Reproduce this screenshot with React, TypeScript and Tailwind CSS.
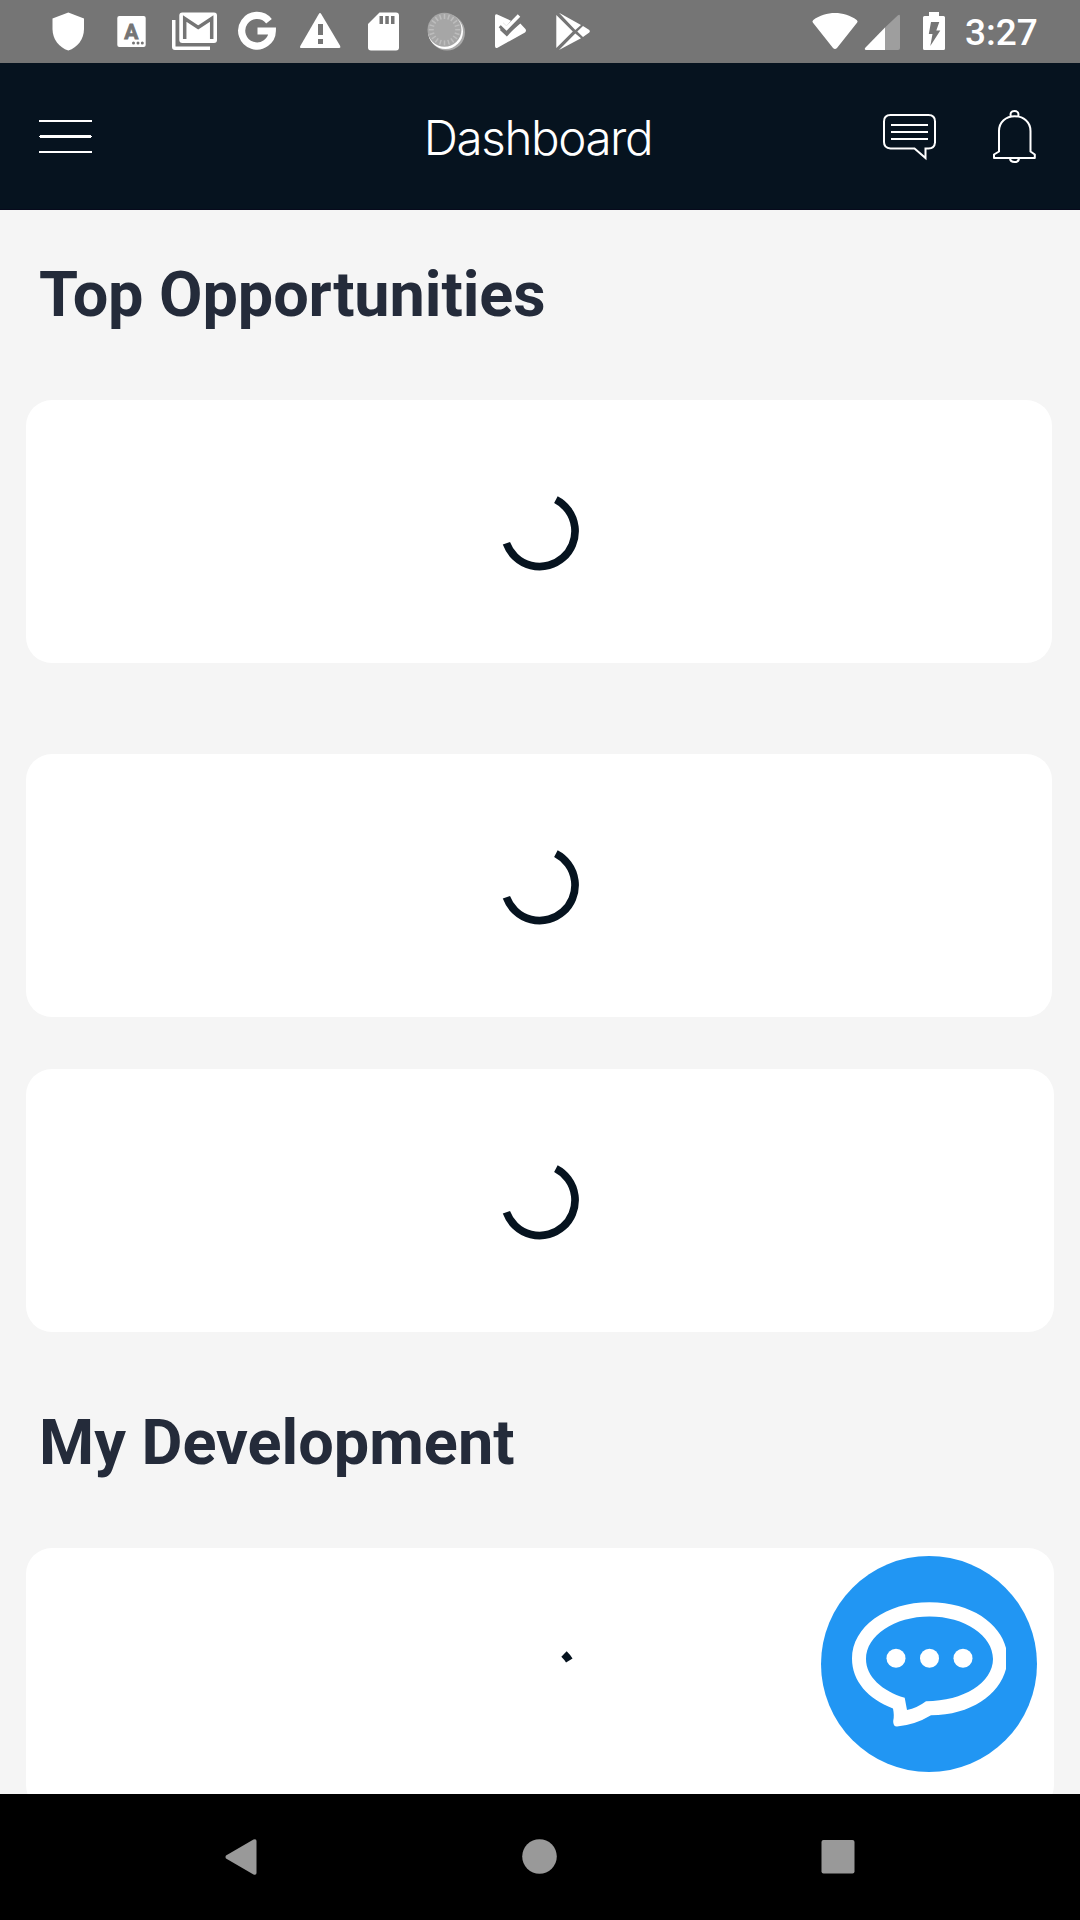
import type { ReactNode } from 'react';

function StatusIcon({ x, w = 63, children }: { x: number; w?: number; children: ReactNode }) {
  return (
    <svg width={w} height={63} viewBox={`${x} 0 ${w} 63`} fill="#fff" className="shrink-0">
      {children}
    </svg>
  );
}

const ticks = Array.from({ length: 20 }, (_, i) => i * 18);

function StatusBar() {
  return (
    <div className="flex h-[63px] shrink-0 items-center bg-[#757575] pl-[37px]">
      <StatusIcon x={37}>
        <path d="M68.3 12.5 84 18.5V29c0 10-6.500 18.500-15.700 21.500C59 47.500 52.500 39 52.500 29V18.500Z" />
      </StatusIcon>
      <StatusIcon x={100}>
        <rect x="117.300" y="16" width="28.400" height="31" rx="2" />
        <text x="131.200" y="38.500" textAnchor="middle" fill="#757575" stroke="#757575" strokeWidth="0.800" fontFamily="Roboto" fontWeight="700" fontSize="21">A</text>
        <g fill="#757575"><circle cx="133.500" cy="43" r="1.500" /><circle cx="138" cy="43" r="1.500" /><circle cx="142.300" cy="43" r="1.500" /></g>
      </StatusIcon>
      <StatusIcon x={163}>
        <path d="M172 20h3.500v26.500H210V50H175q-3 0-3-3Z" />
        <rect x="179.300" y="12.500" width="37.700" height="30.500" rx="3" />
        <path d="M184.700 39V18.500L198.200 27.500 211.700 18.500V39" fill="none" stroke="#757575" strokeWidth="3.500" />
      </StatusIcon>
      <StatusIcon x={226}>
        <path d="M269 21.200A15.300 15.300 0 1 0 272.300 31H257.500" fill="none" stroke="#fff" strokeWidth="7.200" />
      </StatusIcon>
      <StatusIcon x={289}>
        <path d="M318.800 14q1.200-2 2.400 0L340.200 46q.8 2-1 2H301.500q-2.200 0-1.200-2Z" />
        <path d="M318 24h5v11h-5zM318 39h5v5h-5z" fill="#757575" />
      </StatusIcon>
      <StatusIcon x={352}>
        <path d="M379.500 12.500H396q3 0 3 3V47.500q0 3-3 3H371q-3 0-3-3V24Z" />
        <path d="M379.500 16h3.500v8h-3.500zM385.300 16h3.500v8h-3.500zM391 16h3.500v8H391z" fill="#757575" />
      </StatusIcon>
      <StatusIcon x={415}>
        <circle cx="447" cy="32.500" r="18" fill="#aaa" />
        <circle cx="445.500" cy="31.500" r="17.500" />
        <circle cx="444.500" cy="29.700" r="17" fill="#a6a6a6" />
        <g stroke="#bdbdbd" strokeWidth="1.500">
          {ticks.map((a) => <path key={a} d="M444.500 14v5" transform={`rotate(${a} 444.500 29.700)`} />)}
        </g>
      </StatusIcon>
      <StatusIcon x={478}>
        <path d="M495 16q0-2.500 2.300-1.500L511 20.800 506.500 26l-3.300-3.200-4.500 4.500 8 8L520.300 23.500 525 28.500q2 2 0 4L498 47.500q-3 1.500-3-1.500Z" />
        <path d="m501 28.800 5.800 5.500L518.500 21.500" fill="none" stroke="#757575" strokeWidth="3.200" />
        <path d="M501.500 23.500 506.500 28.200 519 15.500" fill="none" stroke="#fff" strokeWidth="3.500" />
      </StatusIcon>
      <StatusIcon x={541}>
        <path d="M556.300 15 572.800 31.500 556.300 48ZM559 12.800 581 25 575.300 30ZM559 50 575.300 33.500 581 38.200ZM583 26 589.300 30q1.200 1.300 0 2.600L583 37 577.300 31.500Z" />
      </StatusIcon>
      <div className="flex-1" />
      <StatusIcon x={805} w={56}>
        <path d="M812.800 22.500q-1-1.500.5-2.500C826 10.700 844 10.700 856.700 20q1.500 1 .5 2.500L837 48q-2 2-4 0Z" />
      </StatusIcon>
      <StatusIcon x={861} w={50}>
        <path d="M885 27.500 898 15.200q2-1 2 1V48q0 2-2 2H885Z" fill="#9e9e9e" />
        <path d="M885 27.500V50H866q-2-.5-.7-2.300Z" />
      </StatusIcon>
      <StatusIcon x={911} w={54}>
        <path d="M929 12h10v4h4.500q1.500 0 1.500 1.500v31q0 1.500-1.500 1.500h-19q-1.500 0-1.500-1.500v-31q0-1.500 1.500-1.500h4.500Z" />
        <path d="M931 22h8.300l-3 8.500h4L930.300 46l2.200-12h-3.700Z" fill="#757575" />
      </StatusIcon>
      <span className="w-[115px] pt-[3px] font-['Roboto'] text-[37px] leading-[60px] font-medium text-white">3:27</span>
    </div>
  );
}

function Header() {
  return (
    <header className="flex h-[147px] shrink-0 items-center justify-between border-b border-[#070a1c] bg-[#06131f] pr-[42px] pl-[39px]">
      <svg width="150" height="147" viewBox="39 63 150 147" fill="#fff">
        <path d="M39 120h53v2H39zM40 135h51v3H40zM39 136h53v1H39zM39 151h53v2H39z" />
      </svg>
      <h1 className="pt-1 pl-[5px] font-['Inter'] text-[47.500px] leading-none font-light tracking-[-1.400px] text-white">Dashboard</h1>
      <svg width="156" height="147" viewBox="882 63 156 147" fill="none" stroke="#fff" strokeWidth="2">
        <path d="M890.500 115H928.500Q935 115 935 121.500V142.500Q934.500 148.500 928.500 148.500H925.500V158L914.500 148.500H890.500Q884 148 884 142V121.500Q884 115 890.500 115Z" />
        <path d="M891 125h37M891 132h37M891 139h37" />
        <path d="M1010.800 116.500C1010 113 1011 111 1014.500 111S1019 113 1018.200 116.500" />
        <path d="M999 151.500V131C999 122 1006 116.200 1014.700 116.200S1030.500 122 1030.500 131V151.500L1034.800 154.500V158H994V154.500Z" strokeLinejoin="round" />
        <path d="M1010 158.500Q1010.500 162 1014.500 162T1019 158.500" />
      </svg>
    </header>
  );
}

function Spinner({ arc }: { arc: string }) {
  return (
    <svg width="80" height="80" viewBox="-40 -40 80 80" fill="none" stroke="#06131f" strokeWidth="7.700">
      <path d={arc} />
    </svg>
  );
}

const LONG_ARC = 'M15.900-32.300A35.400 35.400 0 1 1-33.600 11.300';
const SHORT_ARC = 'M24-26A35.400 35.400 0 0 1 29.300-19.500';

function LoadingCard({ className, arc = LONG_ARC }: { className: string; arc?: string }) {
  return (
    <div className={`flex h-[263px] shrink-0 items-center justify-center rounded-[26px] bg-white ${className}`}>
      <Spinner arc={arc} />
    </div>
  );
}

function ChatButton() {
  return (
    <button className="absolute right-[43px] bottom-[22px] size-[216px] rounded-full bg-[#2196f3]" aria-label="Chat">
      <svg width="216" height="216" viewBox="821 1556 216 216" fill="#fff">
        <path d="M929.500 1602.300C972 1602.300 1000 1624 1006 1648V1669C999 1695 971 1715 931 1715.300Q915 1725 897 1726.500Q893 1726.500 893.200 1721Q894.500 1716 893 1708.500C868 1699 852 1681 852 1658.500C852 1627 886 1602.300 929.500 1602.300Z" />
        <path d="M929.500 1616.500C964.500 1616.500 993 1635.500 993 1659S963.500 1701.200 926 1701.200Q917 1708 907 1710L904.700 1697.800C882 1691 866 1676.500 866 1659C866 1635.500 894.500 1616.500 929.500 1616.500Z" fill="#2196f3" />
        <circle cx="896" cy="1658.300" r="9.500" />
        <circle cx="929.500" cy="1658.300" r="9.500" />
        <circle cx="963" cy="1658.300" r="9.500" />
      </svg>
    </button>
  );
}

function NavBar() {
  return (
    <nav className="flex h-[126px] shrink-0 items-center justify-between bg-black pr-[225px] pl-[225px]">
      <svg width="32" height="126" viewBox="225 1794 32 126" fill="#999">
        <path d="M226 1858.500q-1-1.500 0-3L253.500 1839.500q3-1 3 1.500V1873q0 2.500-3 1.500Z" />
      </svg>
      <svg width="36" height="126" viewBox="521 1794 36 126" fill="#999">
        <circle cx="539.500" cy="1856.500" r="17.300" />
      </svg>
      <svg width="34" height="126" viewBox="821 1794 34 126" fill="#999">
        <rect x="821.500" y="1840" width="33" height="33.500" rx="2" />
      </svg>
    </nav>
  );
}

export default function App() {
  return (
    <div className="flex h-[1920px] w-[1080px] flex-col overflow-hidden bg-[#f5f5f5]">
      <StatusBar />
      <Header />
      <main className="relative flex h-[1584px] shrink-0 flex-col overflow-hidden pl-[26px] font-['Roboto'] text-[#242b3a]">
        <h2 className="mt-[48px] h-[74px] shrink-0 pl-[13px] text-[63px] leading-[74px] font-bold tracking-[-0.080px]">Top Opportunities</h2>
        <LoadingCard className="mt-[68px] w-[1026px] pl-[2px]" />
        <LoadingCard className="mt-[91px] w-[1026px] pl-[2px]" />
        <LoadingCard className="mt-[52px] w-[1028px]" />
        <h2 className="mt-[74px] h-[74px] shrink-0 pl-[13px] text-[63px] leading-[74px] font-bold">My Development</h2>
        <LoadingCard className="mt-[68px] w-[1028px]" arc={SHORT_ARC} />
        <ChatButton />
      </main>
      <NavBar />
    </div>
  );
}
